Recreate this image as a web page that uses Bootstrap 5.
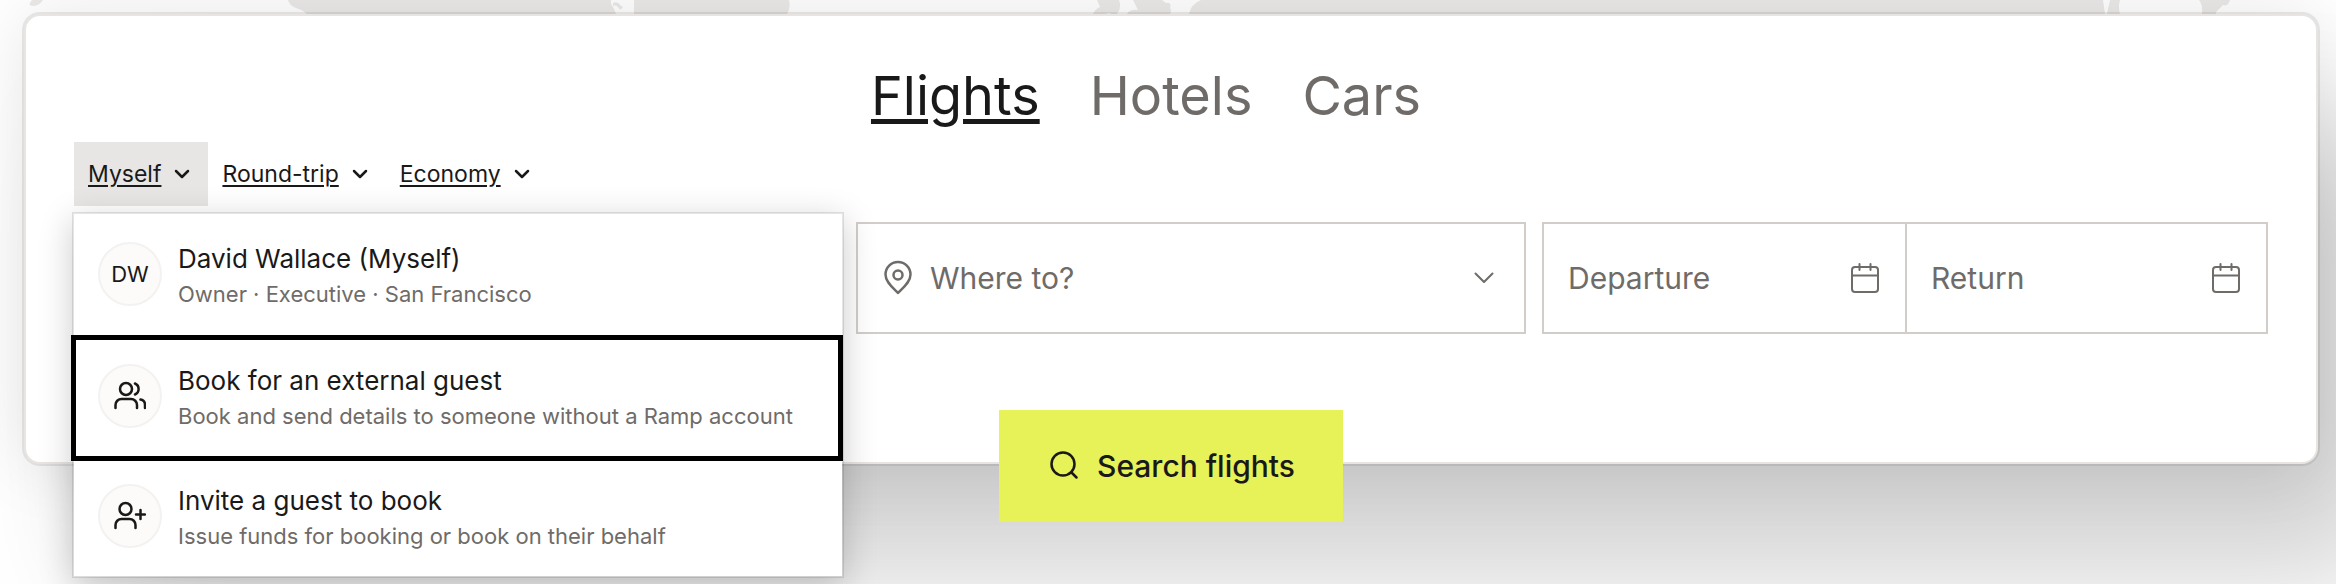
<!DOCTYPE html>
<html lang="en">
<head>
<meta charset="utf-8">
<meta name="viewport" content="width=device-width, initial-scale=1">
<title>Book travel</title>
<link href="https://cdn.jsdelivr.net/npm/bootstrap@5.3.0/dist/css/bootstrap.min.css" rel="stylesheet">
<style>
  :root { --ink: #1a1919; --muted: #6f6b68; --line: #d2cdc9; }
  body { font-family: Inter, "Liberation Sans", sans-serif; color: var(--ink); background: #fff; overflow: hidden; }
  .world { height: 14px; fill: #ebeae8; }
  .booking {
    margin: 14px 18px 120px 24px; padding: 48px 48px 0; background: #fff;
    border: 2px solid #e8e4e1; border-radius: 16px;
    box-shadow: 0 0 0 2px rgba(0,0,0,.08), 0 0 70px rgba(0,0,0,.1), 72px 112px 120px rgba(0,0,0,.18);
  }
  .kinds a { font-size: 54px; line-height: 64px; margin-right: 50px; color: var(--muted); text-decoration: none; }
  .kinds a.current { color: var(--ink); text-decoration: underline; text-decoration-thickness: 5px; text-underline-offset: 4px; }
  .filters { margin-top: 14px; }
  .filter-btn { font-size: 23px; line-height: 32px; padding: 16px 14px; gap: 9px; border: 0; background: transparent; color: var(--ink); }
  .filter-btn span { text-decoration: underline; text-decoration-thickness: 2px; text-underline-offset: 3px; }
  .filter-btn.open { background: #e7e6e4; }
  .people { top: 70px; left: -2px; z-index: 5; width: 772px; background: #fff; background-clip: padding-box; border: 2px solid rgba(0,0,0,.1); box-shadow: 0 8px 32px rgba(0,0,0,.2); }
  .person { padding: 28px 24px 22px; gap: 16px; border: 0; background: #fff; color: var(--ink); }
  .person + .person.picked { margin-top: 2px; }
  .picked::after { content: ""; position: absolute; inset: -1px -1px -5px -3px; border: 5px solid #000; z-index: 1; }
  .face { width: 64px; height: 64px; font-size: 22px; background: #fcfbfa; border: 2px solid #f4f2f1; }
  .who { font-size: 26px; line-height: 34px; }
  .about { font-size: 22px; line-height: 36px; color: var(--muted); }
  .fields { display: grid; grid-template-columns: minmax(0, 766fr) minmax(0, 670fr) minmax(0, 726fr); gap: 16px; margin-top: 16px; }
  .where { grid-column: 2; }
  .box { height: 112px; border: 2px solid var(--line); background: #fff; color: var(--muted); }
  .box input { border: 0; outline: 0; background: transparent; min-width: 0; width: 100%; font-size: 30px; line-height: 40px; color: var(--ink); padding: 0; }
  .box input::placeholder { color: var(--muted); opacity: 1; }
  .where { padding: 0 28px 0 22px; gap: 14px; }
  .day { min-width: 0; padding: 0 24px; }
  .day + .day { border-left: 2px solid var(--line); }
  .search { margin: 76px 0 -60px; height: 112px; padding: 0 48px; gap: 14px; font-size: 30px; font-weight: 500; border: 0; background: #e6f257; color: var(--ink); }
  svg.ico { fill: none; stroke: currentColor; stroke-width: 2; stroke-linecap: round; stroke-linejoin: round; flex: none; }
  .filter-btn svg.ico, .search svg.ico, .where svg.pin, .face svg.ico { stroke-width: 2.5; }
</style>
</head>
<body>
<svg class="world position-absolute top-0 start-0 w-100" viewBox="0 0 2336 14" preserveAspectRatio="none" aria-hidden="true">
  <path d="M32 0H43Q40 5 34 6Q28 6 30 3ZM288 0H611V4Q614 8 616 14H307Q303 10 296 8Q289 5 288 0ZM613 3Q618 1 620 5L623 7L620 10Q617 4 613 6ZM634 0H789Q791 8 787 14H634ZM1097 0H1119Q1122 8 1117 14H1112L1109 13L1105 14H1093Q1095 9 1100 7ZM1133 0H1162L1166 3Q1172 2 1170 8Q1172 11 1170 14H1127Q1130 9 1138 10ZM1201 0H2103L2105 14H1189Q1191 4 1201 0ZM2110 0H2120Q2118 7 2120 14H2107ZM2199 0H2230Q2228 7 2223 5L2216 12V14H2202Q2203 5 2199 0Z"/>
</svg>
<div class="d-flex flex-column min-vh-100">
<main class="booking position-relative">
  <nav class="kinds d-flex justify-content-center" aria-label="Travel type">
    <a class="current" href="#flights" aria-current="page">Flights</a>
    <a href="#hotels">Hotels</a>
    <a href="#cars">Cars</a>
  </nav>

  <div class="filters d-flex position-relative">
    <button type="button" class="filter-btn open d-flex align-items-center" aria-expanded="true"><span>Myself</span>
      <svg class="ico" width="24" height="24" viewBox="0 0 24 24"><path d="M6 9l6 6 6-6"/></svg></button>
    <button type="button" class="filter-btn d-flex align-items-center"><span>Round-trip</span>
      <svg class="ico" width="24" height="24" viewBox="0 0 24 24"><path d="M6 9l6 6 6-6"/></svg></button>
    <button type="button" class="filter-btn d-flex align-items-center"><span>Economy</span>
      <svg class="ico" width="24" height="24" viewBox="0 0 24 24"><path d="M6 9l6 6 6-6"/></svg></button>

    <div class="people position-absolute">
      <button type="button" class="person d-flex w-100 text-start">
        <span class="face rounded-circle d-flex align-items-center justify-content-center">DW</span>
        <span><span class="who d-block">David Wallace (Myself)</span><span class="about d-block">Owner · Executive · San Francisco</span></span>
      </button>
      <button type="button" class="person picked position-relative d-flex w-100 text-start">
        <span class="face rounded-circle d-flex align-items-center justify-content-center">
          <svg class="ico" width="32" height="32" viewBox="0 0 32 32"><circle cx="12" cy="9" r="6"/><path d="M1.500 28v-3a6 6 0 0 1 6-6h9.500a6 6 0 0 1 6 6v3M21 3.500a6 6 0 0 1 0 11M26.500 19.500a5.500 5.500 0 0 1 4.500 5.500V28"/></svg>
        </span>
        <span><span class="who d-block">Book for an external guest</span><span class="about d-block">Book and send details to someone without a Ramp account</span></span>
      </button>
      <button type="button" class="person d-flex w-100 text-start">
        <span class="face rounded-circle d-flex align-items-center justify-content-center">
          <svg class="ico" width="32" height="32" viewBox="0 0 32 32"><circle cx="11.500" cy="9" r="6"/><path d="M1.500 28v-3a6 6 0 0 1 6-6h8a6 6 0 0 1 6 6v3M26.500 10v9M22 14.500h9"/></svg>
        </span>
        <span><span class="who d-block">Invite a guest to book</span><span class="about d-block">Issue funds for booking or book on their behalf</span></span>
      </button>
    </div>
  </div>

  <div class="fields">
    <div class="box where d-flex align-items-center">
      <svg class="ico pin" width="36" height="36" viewBox="0 0 36 36"><path d="M18 33C13.500 28 5.500 22.500 5.500 14.500a12.500 12.500 0 0 1 25 0C30.500 22.500 22.500 28 18 33Z"/><circle cx="18" cy="15" r="4.500"/></svg>
      <input type="text" placeholder="Where to?" aria-label="Where to?">
      <svg class="ico" width="24" height="24" viewBox="0 0 24 24"><path d="M3.500 7.500l8.500 8.500 8.500-8.500"/></svg>
    </div>
    <div class="box d-flex">
      <div class="day d-flex align-items-center w-50">
        <input type="text" placeholder="Departure" aria-label="Departure">
        <svg class="ico" width="32" height="32" viewBox="0 0 32 32"><rect x="3" y="5" width="26" height="25" rx="3"/><path d="M3 13.500h26M10.500 2v6M21.500 2v6"/></svg>
      </div>
      <div class="day d-flex align-items-center w-50">
        <input type="text" placeholder="Return" aria-label="Return">
        <svg class="ico" width="32" height="32" viewBox="0 0 32 32"><rect x="3" y="5" width="26" height="25" rx="3"/><path d="M3 13.500h26M10.500 2v6M21.500 2v6"/></svg>
      </div>
    </div>
  </div>

  <button type="button" class="search d-flex align-items-center mx-auto">
    <svg class="ico" width="36" height="36" viewBox="0 0 36 36"><circle cx="16" cy="16" r="11.500"/><path d="M24.500 24.500l5 5"/></svg>
    <span>Search flights</span>
  </button>
</main>
</div>
<script src="https://cdn.jsdelivr.net/npm/bootstrap@5.3.0/dist/js/bootstrap.bundle.min.js"></script>
</body>
</html>
